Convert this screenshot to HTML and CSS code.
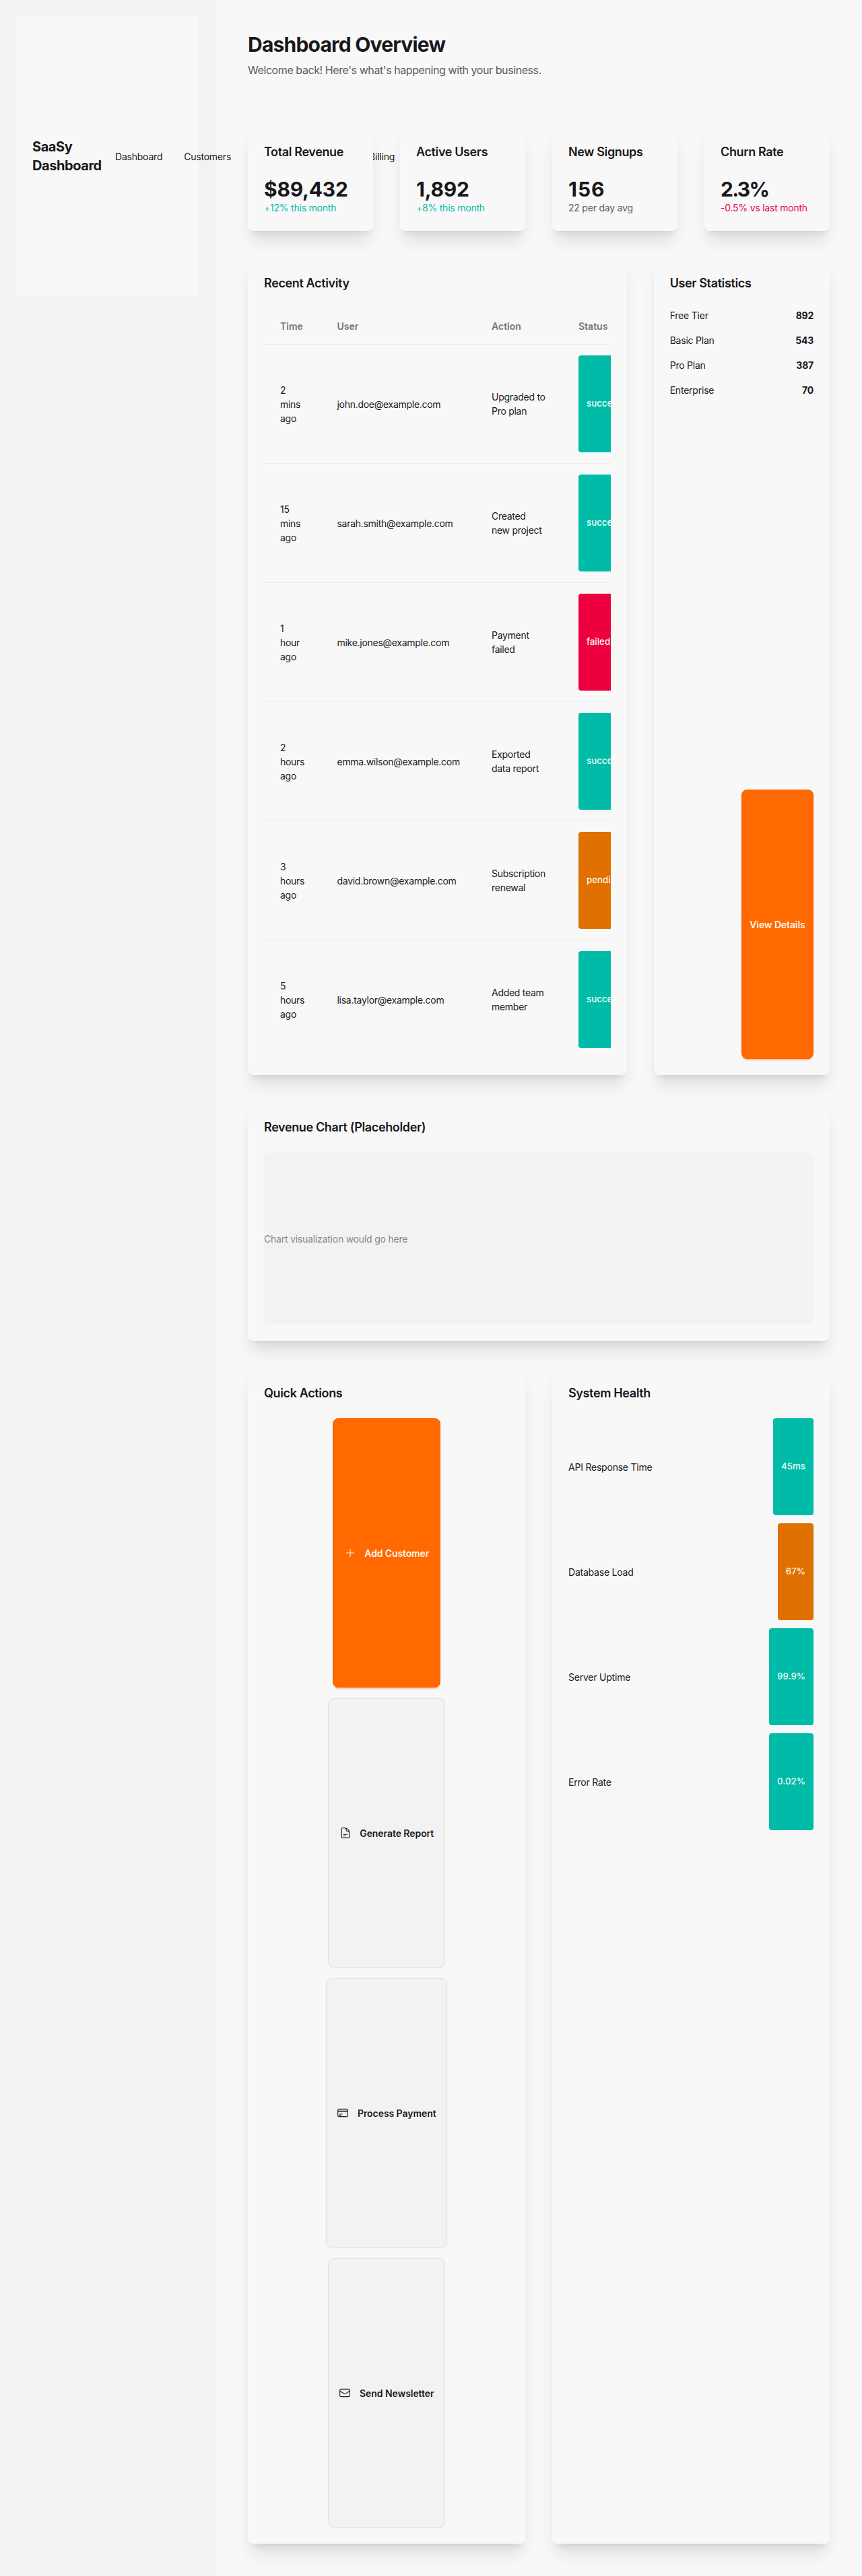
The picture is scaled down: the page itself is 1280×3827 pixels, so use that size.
FILE: index.html
```html
<!DOCTYPE html>
<html lang="en">
<head>
<meta charset="utf-8">
<title>SaaSy Dashboard</title>
<link rel="stylesheet" href="styles.css">
</head>
<body>
<div class="layout">
  <aside class="sidebar">
    <nav class="navbar">
      <div class="brand">SaaSy Dashboard</div>
      <ul class="menu">
        <li>Dashboard</li>
        <li>Customers</li>
        <li class="menu-end">Billing</li>
      </ul>
    </nav>
  </aside>
  <main class="main">
    <header class="page-header">
      <h1>Dashboard Overview</h1>
      <p>Welcome back! Here's what's happening with your business.</p>
    </header>

    <section class="grid stats">
      <div class="card"><h2>Total Revenue</h2><div class="value">$89,432</div><div class="note up">+12% this month</div></div>
      <div class="card"><h2>Active Users</h2><div class="value">1,892</div><div class="note up">+8% this month</div></div>
      <div class="card"><h2>New Signups</h2><div class="value wide">156</div><div class="note">22 per day avg</div></div>
      <div class="card"><h2>Churn Rate</h2><div class="value tight">2.3%</div><div class="note down">-0.5% vs last month</div></div>
    </section>

    <section class="grid overview">
      <div class="card activity">
        <h2>Recent Activity</h2>
        <div class="table-wrap">
          <table>
            <thead><tr><th class="col-time">Time</th><th class="col-user">User</th><th class="col-action">Action</th><th>Status</th></tr></thead>
            <tbody>
              <tr><td>2 mins ago</td><td>john.doe@example.com</td><td>Upgraded to Pro plan</td><td><span class="badge success">success</span></td></tr>
              <tr><td>15 mins ago</td><td>sarah.smith@example.com</td><td>Created new project</td><td><span class="badge success">success</span></td></tr>
              <tr><td>1 hour ago</td><td>mike.jones@example.com</td><td>Payment failed</td><td><span class="badge error">failed</span></td></tr>
              <tr><td>2 hours ago</td><td>emma.wilson@example.com</td><td>Exported data report</td><td><span class="badge success">success</span></td></tr>
              <tr><td>3 hours ago</td><td>david.brown@example.com</td><td>Subscription renewal</td><td><span class="badge warning">pending</span></td></tr>
              <tr><td>5 hours ago</td><td>lisa.taylor@example.com</td><td>Added team member</td><td><span class="badge success">success</span></td></tr>
            </tbody>
          </table>
        </div>
      </div>
      <div class="card user-stats">
        <h2>User Statistics</h2>
        <dl>
          <div><dt>Free Tier</dt><dd>892</dd></div>
          <div><dt>Basic Plan</dt><dd>543</dd></div>
          <div><dt>Pro Plan</dt><dd>387</dd></div>
          <div><dt>Enterprise</dt><dd>70</dd></div>
        </dl>
        <button class="btn primary compact">View Details</button>
      </div>
    </section>

    <section class="card chart-card">
      <h2>Revenue Chart (Placeholder)</h2>
      <div class="chart">Chart visualization would go here</div>
    </section>

    <section class="grid bottom">
      <div class="card">
        <h2>Quick Actions</h2>
        <div class="actions">
          <button class="btn primary">
            <svg class="icon" viewBox="0 0 24 24"><path d="M12 4.5v15m7.5-7.5h-15"/></svg>
            Add Customer
          </button>
          <button class="btn">
            <svg class="icon" viewBox="0 0 24 24"><path d="M19.5 14.25v-2.625a3.375 3.375 0 0 0-3.375-3.375h-1.5A1.125 1.125 0 0 1 13.5 7.125v-1.5a3.375 3.375 0 0 0-3.375-3.375H8.25m0 12.75h7.5m-7.5 3H12M10.5 2.25H5.625c-.621 0-1.125.504-1.125 1.125v17.25c0 .621.504 1.125 1.125 1.125h12.75c.621 0 1.125-.504 1.125-1.125V11.25a9 9 0 0 0-9-9Z"/></svg>
            Generate Report
          </button>
          <button class="btn">
            <svg class="icon" viewBox="0 0 24 24"><path d="M2.25 8.25h19.5M2.25 9h19.5m-16.5 5.25h6m-6 2.25h3m-3.75 3h15a2.25 2.25 0 0 0 2.25-2.25V6.75A2.25 2.25 0 0 0 19.5 4.5h-15a2.25 2.25 0 0 0-2.25 2.25v10.5A2.25 2.25 0 0 0 4.5 19.5Z"/></svg>
            Process Payment
          </button>
          <button class="btn">
            <svg class="icon" viewBox="0 0 24 24"><path d="M21.75 6.75v10.5a2.25 2.25 0 0 1-2.25 2.25h-15a2.25 2.25 0 0 1-2.25-2.25V6.75m19.5 0A2.25 2.25 0 0 0 19.5 4.5h-15a2.25 2.25 0 0 0-2.25 2.25m19.5 0v.243a2.25 2.25 0 0 1-1.07 1.916l-7.5 4.615a2.25 2.25 0 0 1-2.36 0L3.32 8.91a2.25 2.25 0 0 1-1.07-1.916V6.75"/></svg>
            Send Newsletter
          </button>
        </div>
      </div>
      <div class="card">
        <h2>System Health</h2>
        <div class="health">
          <div><span>API Response Time</span><span class="badge success">45ms</span></div>
          <div><span>Database Load</span><span class="badge warning">67%</span></div>
          <div><span>Server Uptime</span><span class="badge success">99.9%</span></div>
          <div><span>Error Rate</span><span class="badge success">0.02%</span></div>
        </div>
      </div>
    </section>
  </main>
</div>
</body>
</html>
```
FILE: styles.css
```css
* { box-sizing: border-box; margin: 0; padding: 0; }

body {
  font-family: Inter, "Liberation Sans", sans-serif;
  font-size: 14px;
  line-height: 1.5;
  letter-spacing: -0.22px;
  color: #18181b;
  background: #f8f8f8;
}

.layout { display: flex; align-items: stretch; }

.sidebar { width: 320px; flex: none; padding: 24px; background: #f2f2f2; }

.navbar {
  display: flex;
  align-items: center;
  height: 416px;
  padding: 0 24px;
  background: #f8f8f8;
}

.brand { width: 107px; flex: none; font-size: 20px; font-weight: 700; line-height: 28px; letter-spacing: -0.43px; }

.menu { display: flex; flex: none; list-style: none; }
.menu li { padding: 0 16px; white-space: nowrap; }
.menu .menu-end { margin-left: 173px; }

.main { flex: 1; min-width: 0; padding: 48px; display: flex; flex-direction: column; gap: 40px; }

/* positioned so the cards paint above the overflowing menu */
.card {
  position: relative;
  min-width: 0;
  padding: 24px;
  border-radius: 8px;
  background: #f8f8f8;
  box-shadow: 0 20px 25px -5px rgb(0 0 0 / .1), 0 8px 10px -6px rgb(0 0 0 / .1);
}

.page-header { height: 100px; }
h1 { font-size: 30px; font-weight: 700; line-height: 36px; letter-spacing: -0.78px; margin-bottom: 8px; }
.page-header p { font-size: 16px; letter-spacing: -0.42px; color: #5b5b5d; }
h2 { font-size: 18px; font-weight: 600; line-height: 27px; letter-spacing: -0.37px; margin-bottom: 24px; }

.grid { display: grid; gap: 40px; }
.stats { grid-template-columns: repeat(4, 1fr); }
.overview { grid-template-columns: repeat(3, 1fr); }
.activity { grid-column: span 2; }
.bottom { grid-template-columns: repeat(2, 1fr); }

.value { font-size: 30px; font-weight: 700; line-height: 36px; letter-spacing: -0.26px; }
.value.wide { letter-spacing: 1px; }
.value.tight { letter-spacing: -1.7px; }
.note { line-height: 20px; color: #5b5b5d; white-space: nowrap; }
.up { color: #00bba7; }
.down { color: #ec003f; }

.table-wrap { overflow: hidden; }
table { width: 560px; table-layout: fixed; border-collapse: separate; border-spacing: 0; text-align: left; }
.col-time { width: 84.5px; }
.col-user { width: 229.5px; }
.col-action { width: 129px; }
th, td { padding: 16px 24px; vertical-align: middle; border-bottom: 1px solid #ececec; }
th { color: #747475; font-weight: 600; letter-spacing: 0; }
td { letter-spacing: -0.28px; }
tbody tr:last-child td { border-bottom: 0; }

.badge {
  display: flex;
  align-items: center;
  justify-content: center;
  width: fit-content;
  height: 144px;
  padding: 0 12px;
  border-radius: 4px;
  font-size: 13.3px;
  font-weight: 500;
  letter-spacing: 0;
  white-space: nowrap;
}
.success { background: #00bba7; color: #f0fdfa; }
.warning { background: #e07000; color: #fffbeb; }
.error { background: #ec003f; color: #fff1f2; }

.user-stats { display: flex; flex-direction: column; }
.user-stats dl { display: flex; flex-direction: column; gap: 16px; }
.user-stats dl div { display: flex; justify-content: space-between; }
.user-stats dd { font-weight: 700; }
.user-stats .btn { margin-top: auto; align-self: flex-end; }

.btn {
  display: flex;
  align-items: center;
  gap: 12.5px;
  height: 400px;
  padding: 0 15.5px;
  border: 1px solid #e2e2e2;
  border-radius: 8px;
  background: #f2f2f2;
  color: #18181b;
  font: 600 14px/21px Inter, "Liberation Sans", sans-serif;
  letter-spacing: -0.06px;
  white-space: nowrap;
  box-shadow: 0 1px 2px rgb(0 0 0 / .04);
}
.btn.primary {
  border-color: #f26300;
  background: #ff6900;
  color: #fff7ed;
  letter-spacing: -0.12px;
  box-shadow: 0 3px 2px -2px rgb(255 105 0 / .3), 0 4px 3px -2px rgb(255 105 0 / .3);
}
.btn.compact { padding: 0 11.5px; }

.icon { width: 18px; height: 18px; fill: none; stroke: currentColor; stroke-width: 1.5; stroke-linecap: round; stroke-linejoin: round; }

.chart { display: flex; align-items: center; height: 256px; border-radius: 8px; background: #f2f2f2; color: #878788; }

.actions { display: flex; flex-direction: column; align-items: center; gap: 16px; }

.health { display: flex; flex-direction: column; gap: 12px; }
.health div { display: flex; align-items: center; justify-content: space-between; }
```
